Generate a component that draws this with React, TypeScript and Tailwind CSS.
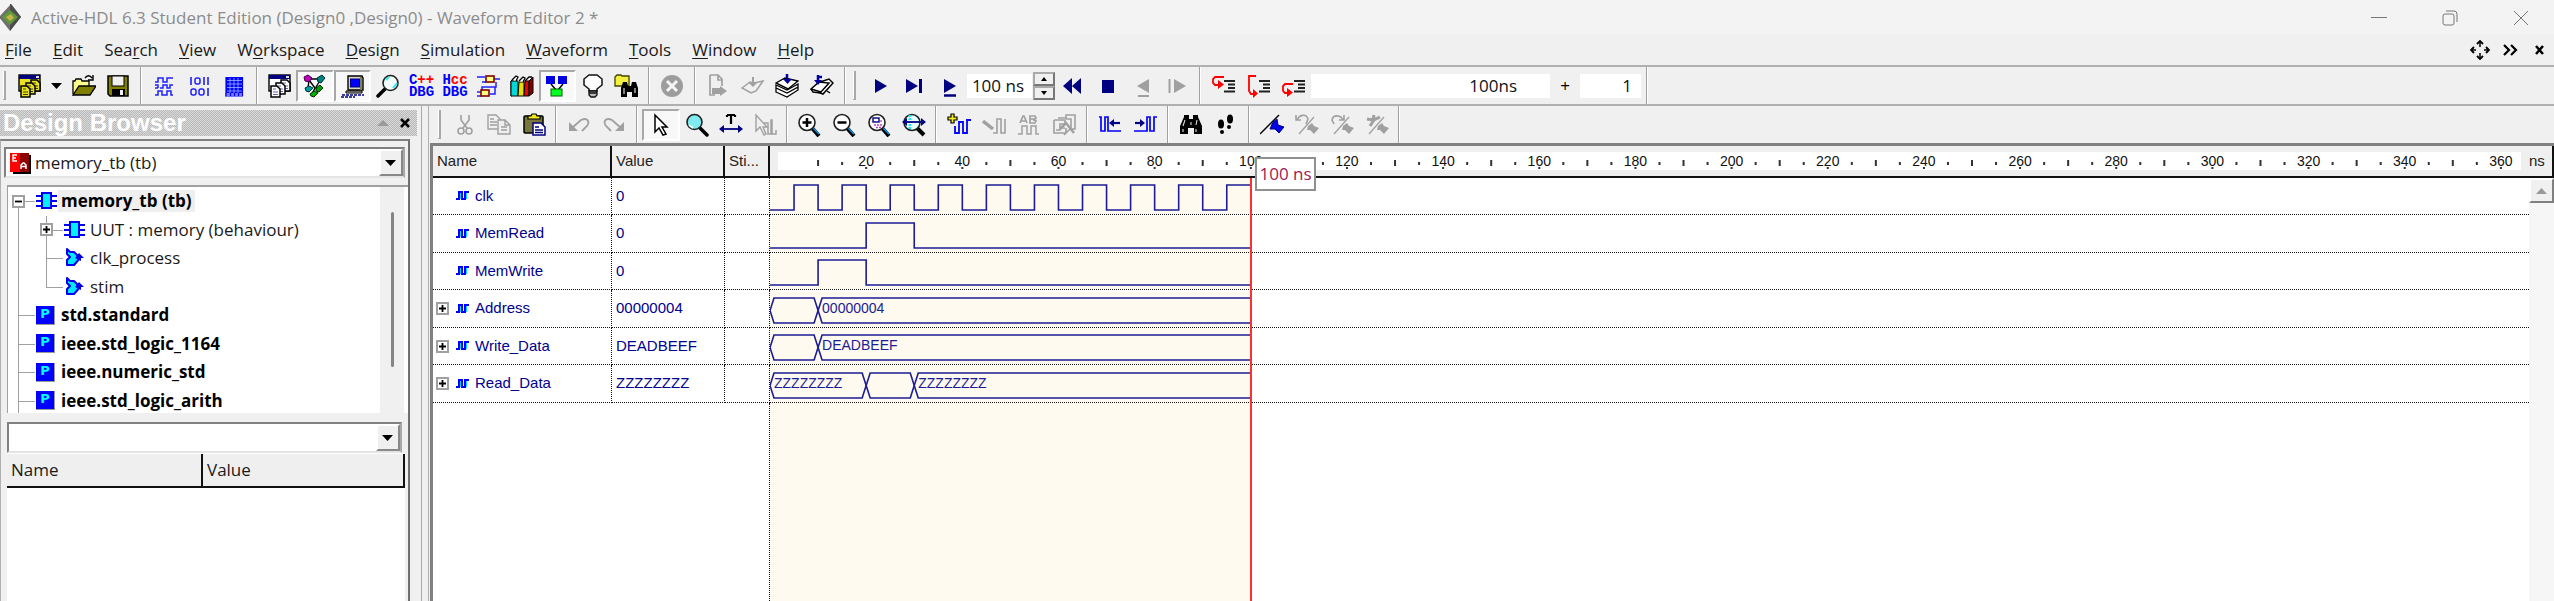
import React from "react";

const NAVY = "#000080";

function Icon({ children, w = 24, h = 24, label }: { children: React.ReactNode; w?: number; h?: number; label?: string }) {
  return (
    <svg width={w} height={h} viewBox={`0 0 ${w} ${h}`} fill="none" aria-hidden={!label} aria-label={label} className="shrink-0">
      {children}
    </svg>
  );
}

/* ---------- main toolbar icons ---------- */

const Page = ({ x, y, fill, line }: { x: number; y: number; fill: string; line: string }) => (
  <g>
    <path d={`M${x} ${y}h6l3 3v8h-9z`} fill={fill} stroke="#000" strokeWidth="1.5" />
    <path d={`M${x + 2} ${y + 3}h3M${x + 2} ${y + 6}h5M${x + 2} ${y + 8.5}h5`} stroke={line} strokeWidth="1.2" />
  </g>
);

const WindowPages = ({ fill, line }: { fill: string; line: string }) => (
  <Icon>
    <rect x="1" y="1" width="21" height="16" fill={fill} stroke="#000" strokeWidth="1.4" />
    <rect x="1" y="1" width="21" height="4" fill={NAVY} />
    <path d="M18 2h3v2h-3z" fill="#ddd" />
    <Page x={13} y={6} fill={fill} line={line} />
    <Page x={8} y={9} fill={fill} line={line} />
    <Page x={3} y={12} fill={fill} line={line} />
  </Icon>
);

const NewDoc = () => <WindowPages fill="#e8e020" line="#404000" />;
const Docs = () => <WindowPages fill="#ffffff" line="#6666aa" />;

const Open = () => (
  <Icon>
    <path d="M1 20V7h2l1-2h5l1 2h7v5" fill="#ffff90" stroke="#000" strokeWidth="1.3" />
    <path d="M1 21l6-9h17l-6 9z" fill="#808000" stroke="#000" strokeWidth="1.3" />
    <path d="M13 4c2-3 5-3 7 0M21 1v5h-5" stroke="#000" strokeWidth="1.4" />
  </Icon>
);

const Save = () => (
  <Icon>
    <path d="M2 2h20v20H4l-2-2z" fill="#808000" stroke="#000" strokeWidth="1.5" />
    <rect x="6" y="2" width="12" height="10" fill="#f0f0f0" stroke="#000" />
    <rect x="6" y="15" width="13" height="7" fill="#000" />
    <rect x="14" y="16" width="3" height="5" fill="#f0f0f0" />
  </Icon>
);

const WaveNew = () => (
  <Icon>
    <path d="M3 8h3V4h5v4h4V4h6M8 14h3v-3h4v3h3v-3h3M3 14h3M3 21h3v-4h4v4h5v-4h4v4h2M3 11h3v3" stroke="#2020ff" strokeWidth="1.5" />
  </Icon>
);

const Bits = () => (
  <Icon>
    <path d="M4 3v8M17 3v8M21 3v8M21 14v8" stroke="#2020ff" strokeWidth="1.6" />
    <rect x="8" y="4" width="5" height="6" rx="2" stroke="#2020ff" strokeWidth="1.5" />
    <rect x="4" y="15" width="5" height="6" rx="2" stroke="#2020ff" strokeWidth="1.5" />
    <rect x="12" y="15" width="5" height="6" rx="2" stroke="#2020ff" strokeWidth="1.5" />
  </Icon>
);

const GridIcon = () => (
  <Icon>
    <rect x="4" y="3" width="17" height="16" fill="#00f" />
    <path d="M3 20h18M3 22h18M4 3v19M8.500 3v19M12.500 3v19M16.500 3v19M20.500 3v19" stroke="#00f" strokeWidth="1.2" />
    <path d="M5 6.500h15M5 10h15M5 13.500h15M5 17h15M8 4v15M12 4v15M16 4v15" stroke="#9ab0ff" strokeWidth=".8" />
  </Icon>
);

const Hierarchy = () => (
  <Icon>
    <path d="M5 5l13 0M6 6l-1 8M6 6l6 8M13 13l5-8M12 14l6 0M12 14l-3 6" stroke="#000" strokeWidth="1.4" />
    <path d="M1 3l4-2 4 3-3 4-4-1z" fill="#c000c0" stroke="#400040" />
    <path d="M14 4l5-3 3 3-4 5-3-1z" fill="#008080" stroke="#003030" />
    <path d="M2 14l4-2 4 2-4 4-3-1z" fill="#00a0a0" stroke="#003030" />
    <path d="M13 14l4-3 3 3-4 4-3-1z" fill="#00a000" stroke="#003000" />
    <path d="M7 20l4-3 4 2-4 4-3-1z" fill="#00b000" stroke="#003000" />
  </Icon>
);

const Console = () => (
  <Icon>
    <path d="M7 2h14l1 2v12H7z" fill="#d8d8c0" stroke="#000" strokeWidth="1.4" />
    <path d="M20 3v13" stroke="#808060" strokeWidth="2" />
    <rect x="9.500" y="5" width="9" height="8" fill="#00f" stroke="#000080" />
    <path d="M5 17h16v2H5z" fill="#c0c0b0" stroke="#000" />
    <path d="M1 21h22M0 23h14" stroke="#000080" strokeWidth="1.4" strokeDasharray="3 1" />
  </Icon>
);

const Magnify = ({ flip = false }: { flip?: boolean }) => (
  <Icon>
    <g transform={flip ? "translate(24 0) scale(-1 1)" : undefined}>
      <path d="M9 15L2 22" stroke="#000" strokeWidth="3.500" strokeLinecap="round" />
      <circle cx="14.500" cy="9" r="7.500" fill={flip ? "#7feaf0" : "#f4ffff"} stroke="#222" strokeWidth="1.6" />
      <path d={flip ? "M16 15l4-3" : "M10 6l3-3M17 14l4-5"} stroke={flip ? "#e8ffff" : "#30e8f0"} strokeWidth="2" />
    </g>
  </Icon>
);

const Dbg = ({ kind }: { kind: "c" | "h" }) => (
  <span className="flex flex-col items-center font-['Liberation_Mono',monospace] text-[14px] leading-3 font-bold text-[#00f]">
    <span>
      {kind === "c" ? "C" : "H"}
      <span className="text-[#f00]">{kind === "c" ? "++" : "cc"}</span>
    </span>
    <span>DBG</span>
  </span>
);

const Circuit = () => (
  <Icon>
    <path d="M1 3h8M17 5h7M20 8v5H6v4M6 8h4M1 18h4M1 22h4M14 20h5v-7" stroke="#2020ff" strokeWidth="1.5" />
    <rect x="10" y="2" width="8" height="6" fill="#ffff80" stroke="#800000" strokeWidth="1.6" />
    <rect x="5" y="16" width="8" height="6" fill="#ffff80" stroke="#800000" strokeWidth="1.6" />
  </Icon>
);

const Books = () => (
  <Icon>
    <path d="M1 7l3-3v17l-3 1z" fill="#008080" stroke="#000" />
    <path d="M3 7h5v15H1V7z" fill="#00d8d8" stroke="#000" />
    <path d="M9 8h5v14H8z" fill="#e8e000" stroke="#000" />
    <path d="M15 7h4v15h-5z" fill="#f00000" stroke="#000" />
    <path d="M19 7l4-4v16l-4 3z" fill="#800000" stroke="#000" />
    <path d="M2 6l4-4 2 1-2 4M9 7l4-4 2 1-2 4M15 7l4-4 3 0" fill="#fff" stroke="#000" strokeWidth="1.3" />
  </Icon>
);

const Blocks = () => (
  <Icon>
    <path d="M6 10l5 6M18 10l-5 6" stroke="#000" strokeWidth="1.4" />
    <rect x="1" y="2" width="9" height="8" fill="#0000e0" />
    <rect x="13" y="2" width="9" height="8" fill="#0000e0" />
    <rect x="6" y="15" width="11" height="7" fill="#00ff20" stroke="#006000" />
  </Icon>
);

const Bulb = () => (
  <Icon>
    <path d="M8 15L3 11V5l5-4h8l5 4v6l-5 4v2H8z" fill="#fff" stroke="#111" strokeWidth="1.5" />
    <path d="M8 17h8v4l-2 2h-4l-2-2zM8 19h8" fill="#bbb" stroke="#111" strokeWidth="1.3" />
  </Icon>
);

const FindFolder = () => (
  <Icon>
    <path d="M1 3l2-2h4l1 1h7v10H1z" fill="#f4f040" stroke="#444400" strokeWidth="1.3" />
    <path d="M7 23V14l2-6h4l1 4h3l1-4h4l2 6v9h-6v-5h-5v5z" fill="#000" />
    <path d="M10 14v6M21 14v5" stroke="#fff" strokeWidth="1" />
  </Icon>
);

const Stop = () => (
  <Icon>
    <circle cx="12" cy="12" r="11" fill="#9d9d9d" />
    <path d="M7 7l10 10M17 7L7 17" stroke="#f5f5f5" strokeWidth="3" />
  </Icon>
);

const DocArrow = () => (
  <Icon>
    <path d="M4 1h8l4 4v7M4 1v20h5M12 1v5h4" stroke="#a0a0a0" strokeWidth="1.7" />
    <path d="M6 14h8v-2l7 5-7 5v-2H6z" fill="#a0a0a0" />
  </Icon>
);

const SheetGray = () => (
  <Icon>
    <path d="M1 14l8-6 4 1 9-2-7 10-5 2z" stroke="#a0a0a0" strokeWidth="1.5" />
    <path d="M12 3v8" stroke="#a0a0a0" strokeWidth="2" />
    <path d="M8 9h8l-4 4z" fill="#a0a0a0" />
  </Icon>
);

const Stack = () => (
  <Icon>
    <path d="M1 18l11 5 11-7v-3l-11 6-11-5zM1 14l11 5 11-6v-3l-11 6-11-5z" fill="#fff" stroke="#000" strokeWidth="1.3" />
    <path d="M1 9l9-5 13 3-10 8z" fill="#fff" stroke="#000" strokeWidth="1.4" />
    <path d="M12 0v6" stroke="#0000a0" strokeWidth="2.500" />
    <path d="M8 5h9l-4.500 5z" fill="#0000a0" />
  </Icon>
);

const SheetsNext = () => (
  <Icon>
    <path d="M10 8l9-3 4 4-10 11-5-2" fill="#fff" stroke="#000" strokeWidth="1.5" />
    <path d="M1 15l8-7 10 1-8 9z" fill="#fff" stroke="#000" strokeWidth="1.5" />
    <path d="M1 15l2 3 8 1M17 17l3 2" stroke="#000" strokeWidth="1.4" />
    <path d="M8 1v6M8 3h4" stroke="#0000a0" strokeWidth="2.500" />
    <path d="M4 6h8l-4 5z" fill="#0000a0" />
  </Icon>
);

const Play = () => <Icon><path d="M6 5l12 7-12 7z" fill={NAVY} /></Icon>;
const PlayEnd = () => (
  <Icon>
    <path d="M3 5l12 7-12 7z" fill={NAVY} />
    <path d="M17.500 5v14" stroke={NAVY} strokeWidth="3" />
  </Icon>
);
const PlayUnder = () => (
  <Icon>
    <path d="M6 5l12 7-12 7z" fill={NAVY} />
    <path d="M6 21.500h12" stroke={NAVY} strokeWidth="2.500" />
  </Icon>
);
const Rewind = () => <Icon><path d="M12 4L3 12l9 8zM21 4l-9 8 9 8z" fill={NAVY} /></Icon>;
const Square = () => <Icon><rect x="7" y="6" width="12" height="13" fill={NAVY} /></Icon>;
const BackGray = () => (
  <Icon>
    <path d="M19 5L7 12l12 7z" fill="#a0a0a0" />
    <path d="M8 22h11" stroke="#a0a0a0" strokeWidth="2" />
  </Icon>
);
const StepGray = () => (
  <Icon>
    <path d="M4.500 5v14" stroke="#a0a0a0" strokeWidth="2" />
    <path d="M9 5l12 7-12 7z" fill="#a0a0a0" />
  </Icon>
);

const Lines = () => <path d="M12 7h11M16 10.500h7M16 14h7M12 17.500h11" stroke="#222" strokeWidth="1.8" />;
const TraceInto = () => (
  <Icon>
    <path d="M12 3H3L1 5v4l2 2h4" stroke="#f00" strokeWidth="1.8" />
    <path d="M6 6l6 4.500L6 15z" fill="#f00" />
    <Lines />
  </Icon>
);
const TraceOver = () => (
  <Icon>
    <path d="M9 2H2v15l2 3h3" stroke="#f00" strokeWidth="1.8" />
    <path d="M6 15l5 4.500L6 24z" fill="#f00" />
    <Lines />
  </Icon>
);
const TraceOut = () => (
  <Icon>
    <path d="M11 10H3l-2 2v5l2 2h3" stroke="#f00" strokeWidth="1.8" />
    <path d="M5 14l6 4.500L5 23z" fill="#f00" />
    <Lines />
  </Icon>
);

/* ---------- waveform toolbar icons ---------- */

const Cut = () => (
  <Icon>
    <path d="M8 2v5l6 8M16 2v5l-6 8" stroke="#a0a0a0" strokeWidth="1.6" />
    <circle cx="8" cy="18" r="3" stroke="#a0a0a0" strokeWidth="1.6" />
    <circle cx="16" cy="18" r="3" stroke="#a0a0a0" strokeWidth="1.6" />
  </Icon>
);
const Copy = () => (
  <Icon>
    <path d="M1 2h8l4 4v10H1zM3 6h4M3 9h7M3 12h7" stroke="#a0a0a0" strokeWidth="1.4" />
    <path d="M11 7h7l5 5v9H11zM18 7v5h5M14 14h6M14 17h6" fill="#efefef" stroke="#a0a0a0" strokeWidth="1.4" />
  </Icon>
);
const Paste = () => (
  <Icon>
    <rect x="2" y="3" width="19" height="17" rx="1" fill="#77773a" stroke="#000" strokeWidth="1.5" />
    <path d="M6 6V3h3l1-2h4l1 2h3v3z" fill="#f0e820" stroke="#000" strokeWidth="1.2" />
    <path d="M11 10h8l4 4v8H11zM13 14h4M13 17h8M13 19.500h8" fill="#fff" stroke={NAVY} strokeWidth="1.5" />
  </Icon>
);
const Undo = () => (
  <Icon>
    <path d="M2 9v9h9z" fill="#a0a0a0" />
    <path d="M6 14l8-7c7-3 9 2 6 6l-5 5" stroke="#a0a0a0" strokeWidth="1.8" />
  </Icon>
);
const Redo = () => (
  <Icon>
    <path d="M22 9v9h-9z" fill="#a0a0a0" />
    <path d="M18 14l-8-7C3 4 1 9 4 13l5 5" stroke="#a0a0a0" strokeWidth="1.8" />
  </Icon>
);
const Cursor = () => (
  <Icon>
    <path d="M6 2v17l4-4 4 7 3-1-4-7h5z" fill="#fff" stroke="#000" strokeWidth="1.5" />
  </Icon>
);
const Measure = () => (
  <Icon>
    <path d="M8 2h8M12 2v9M8 2v2M16 2v2" stroke="#000" strokeWidth="2.200" />
    <path d="M3 16h18" stroke={NAVY} strokeWidth="1.8" />
    <path d="M5 12L0 16l5 4zM19 12l5 4-5 4z" fill={NAVY} />
  </Icon>
);
const CursorWave = () => (
  <Icon>
    <path d="M3 2v16l4-4 4 8 2-1-3-7h4z" stroke="#a0a0a0" strokeWidth="1.4" />
    <path d="M11 10h4v11h3V7h1v14h4v-4" stroke="#a0a0a0" strokeWidth="1.5" />
  </Icon>
);
const ZoomBase = ({ children }: { children: React.ReactNode }) => (
  <Icon>
    <path d="M15 15l7 8" stroke="#000" strokeWidth="4" />
    <path d="M15 14l7 7" stroke="#1090e0" strokeWidth="1.5" />
    <circle cx="10" cy="9.500" r="8" fill="#fff" stroke="#222" strokeWidth="1.6" />
    {children}
  </Icon>
);
const ZoomIn = () => <ZoomBase><path d="M10 5v9M5.500 9.500h9" stroke="#000" strokeWidth="2.500" /></ZoomBase>;
const ZoomOut = () => <ZoomBase><path d="M5.500 9.500h9" stroke="#000" strokeWidth="2.500" /></ZoomBase>;
const ZoomSel = () => (
  <ZoomBase>
    <rect x="6" y="5" width="6" height="4" stroke={NAVY} strokeWidth="1.4" />
    <path d="M7 12h8M9 14.500h6M14 7v3" stroke="#c040c0" strokeWidth="1.3" strokeDasharray="2 1" />
  </ZoomBase>
);
const ZoomFull = () => (
  <Icon>
    <path d="M15 15l7 7" stroke="#000" strokeWidth="4" />
    <circle cx="10" cy="9.500" r="8" fill="#e8ffff" stroke="#222" strokeWidth="1.6" />
    <path d="M8 2v15" stroke="#30e0f0" strokeWidth="3" strokeDasharray="2 1" />
    <path d="M3 9h18" stroke={NAVY} strokeWidth="1.8" />
    <path d="M5 5L0 9l5 4zM19 5l5 4-5 4z" fill={NAVY} />
  </Icon>
);
const AddWave = () => (
  <Icon>
    <path d="M8 13v7h4V9h4v11h4V7h4" stroke="#00f" strokeWidth="1.8" />
    <path d="M4 1h3v3h3v3H7v3H4V7H1V4h3z" fill="#f0e820" stroke="#000" strokeWidth="1.2" />
  </Icon>
);
const EditWave = () => (
  <Icon>
    <path d="M11 20h4V6h4v14h4V6" stroke="#a0a0a0" strokeWidth="1.6" />
    <path d="M1 8l10 8" stroke="#a0a0a0" strokeWidth="3.500" />
  </Icon>
);
const AbWave = () => (
  <Icon>
    <path d="M3 10l3-7h1l3 7M4 8h5M13 10V3h5l1 2-2 2 2 1-1 2zM13 6h5" stroke="#a0a0a0" strokeWidth="1.7" />
    <path d="M1 21h4v-8h5v8h4v-8h5v8h3" stroke="#a0a0a0" strokeWidth="1.5" />
  </Icon>
);
const MazeGray = () => (
  <Icon>
    <path d="M6 5h8V2h9v14h-6M2 7h11v4H8v4h5M2 7v13h12v-5M4 17h4v-4M14 6h5v4M19 6v9l-7 7" stroke="#a0a0a0" strokeWidth="1.6" />
    <path d="M8 16l6-6 8 10" stroke="#a0a0a0" strokeWidth="2.500" />
  </Icon>
);
const PrevEdge = () => (
  <Icon>
    <path d="M1 4h2v14h4V4h3v14h13" stroke="#00f" strokeWidth="1.7" />
    <path d="M14 10h8" stroke={NAVY} strokeWidth="2.200" />
    <path d="M16 6l-5 4 5 4z" fill={NAVY} />
  </Icon>
);
const NextEdge = () => (
  <Icon>
    <path d="M1 18h13V4h3v14h4V4h3" stroke="#00f" strokeWidth="1.7" />
    <path d="M2 10h6" stroke={NAVY} strokeWidth="2.200" />
    <path d="M7 6l5 4-5 4z" fill={NAVY} />
  </Icon>
);
const Binoculars = () => (
  <Icon>
    <path d="M1 21v-8l4-9V2h5v4h4V2h5v2l4 9v8h-8v-6h-6v6z" fill="#000" />
    <path d="M6 7l-2 6M18 7l-1 5M12 9v3M4 16v3M17 16v3" stroke="#ddd" strokeWidth="1.1" />
  </Icon>
);
const Feet = () => (
  <Icon>
    <ellipse cx="7" cy="11" rx="3" ry="4.500" fill="#000" />
    <ellipse cx="8" cy="19" rx="2" ry="2" fill="#000" />
    <ellipse cx="16" cy="6" rx="3" ry="4.500" fill="#000" />
    <ellipse cx="15" cy="14" rx="2" ry="2" fill="#000" />
  </Icon>
);
const Flag = () => (
  <Icon>
    <path d="M0 21L19 2" stroke="#000" strokeWidth="1.5" />
    <path d="M13 9l4-3 1 6 6 2-5 6-4-4-5 0z" fill="#0000e8" stroke={NAVY} />
  </Icon>
);
const FlagGray = ({ kind }: { kind: "prev" | "next" | "clear" }) => (
  <Icon>
    <path d="M4 21L19 4" stroke="#a0a0a0" strokeWidth="1.3" />
    <path d="M13 13l4-3 2 3 5 2-5 6-4-4-3 0z" fill="#a0a0a0" />
    {kind === "prev" && <path d="M1 2v5h5M2 7c2-5 9-7 11-1l-2 5" stroke="#a0a0a0" strokeWidth="1.6" />}
    {kind === "next" && <path d="M14 2v5H9M13 7C11 2 3 1 2 7l2 4" stroke="#a0a0a0" strokeWidth="1.6" />}
    {kind === "clear" && <path d="M2 6l6 1 1-5M5 13l4-6 6-3" stroke="#a0a0a0" strokeWidth="3" />}
  </Icon>
);

/* ---------- toolbar building blocks ---------- */

function Tool({ label, pressed = false, children }: { label: string; pressed?: boolean; children: React.ReactNode }) {
  return (
    <button
      type="button"
      aria-label={label}
      aria-pressed={pressed || undefined}
      className={
        pressed
          ? "flex h-8 min-w-0 flex-1 items-center justify-center border-2 border-t-[#a8a8a8] border-r-white border-b-white border-l-[#a8a8a8] bg-[#f8f8f8]"
          : "flex h-8 min-w-0 flex-1 items-center justify-center"
      }
    >
      {children}
    </button>
  );
}

const Sep = () => <span className="mx-[5px] w-[2px] shrink-0 self-stretch border-l border-l-[#a0a0a0] bg-white" />;
const Sep4 = () => <span className="mx-1 w-[2px] shrink-0 self-stretch border-l border-l-[#a0a0a0] bg-white" />;
const Grip = () => <span className="my-1 w-[3px] shrink-0 self-stretch border-r-2 border-b border-[#a8a8a8] bg-white" />;

const menus: [string, string, string][] = [
  ["", "F", "ile"],
  ["", "E", "dit"],
  ["Sea", "r", "ch"],
  ["", "V", "iew"],
  ["W", "o", "rkspace"],
  ["", "D", "esign"],
  ["", "S", "imulation"],
  ["", "W", "aveform"],
  ["", "T", "ools"],
  ["", "W", "indow"],
  ["", "H", "elp"],
];

function TitleBar() {
  return (
    <header className="flex h-[35px] shrink-0 items-center bg-[#f3f3f3] pr-[25px] text-[#8c8c8c]">
      <svg width="22" height="28" viewBox="0 0 22 28" aria-hidden="true">
        <path d="M11 0l10 13-11 14L-1 13z" fill="#6f6f6f" />
        <path d="M11 0l10 13-11 14V0z" fill="#4d4d4d" />
        <path d="M10 6l8 7-8 8-8-8z" fill="#5f9a3a" />
        <path d="M6 13l5-3 3 4-4 3z" fill="#c9b24a" />
      </svg>
      <h1 className="ml-[9px] flex-1 text-[17px] whitespace-nowrap">
        Active-HDL 6.3 Student Edition (Design0 ,Design0) - Waveform Editor 2 *
      </h1>
      <div className="flex items-center gap-[55px]">
        <button type="button" aria-label="Minimize">
          <Icon w={16} h={16}><path d="M0 7.500h16" stroke="#777" /></Icon>
        </button>
        <button type="button" aria-label="Restore">
          <Icon w={16} h={16}>
            <rect x="1" y="4" width="11" height="11" rx="2" stroke="#777" />
            <path d="M4 1h8a3 3 0 0 1 3 3v8" stroke="#777" />
          </Icon>
        </button>
        <button type="button" aria-label="Close">
          <Icon w={16} h={16}><path d="M1 1l14 14M15 1L1 15" stroke="#777" /></Icon>
        </button>
      </div>
    </header>
  );
}

function MenuBar() {
  return (
    <nav className="flex h-[30px] shrink-0 items-center pr-1 pl-[5px] text-[17px] text-[#1a1a1a]">
      <div className="flex flex-1 gap-[21px]">
        {menus.map(([a, u, b]) => (
          <button type="button" key={a + u + b} className="leading-6">
            {a}
            <span className="underline underline-offset-2">{u}</span>
            {b}
          </button>
        ))}
      </div>
      <div className="flex items-center gap-[10px]">
        <button type="button" aria-label="Move">
          <Icon w={20} h={20}>
            <path d="M10 1v6M10 13v6M1 10h5M14 10h5" stroke="#000" strokeWidth="1.5" />
            <path d="M7 4l3-3 3 3M7 16l3 3 3-3M4 7l-3 3 3 3M16 7l3 3-3 3" stroke="#000" strokeWidth="1.8" />
          </Icon>
        </button>
        <button type="button" aria-label="More">
          <Icon w={20} h={16}><path d="M4 3l5 5-5 5M11 3l5 5-5 5" stroke="#000" strokeWidth="2.200" /></Icon>
        </button>
        <button type="button" aria-label="Close document">
          <Icon w={20} h={16}><path d="M6 4l7 8M13 4l-7 8" stroke="#000" strokeWidth="2.500" /></Icon>
        </button>
      </div>
    </nav>
  );
}

function MainToolbar() {
  return (
    <div role="toolbar" aria-label="Standard" className="flex h-[41px] shrink-0 items-center border-t-2 border-b-2 border-t-[#b0b0b0] border-b-[#b0b0b0] pl-[3px]">
      <Grip />
      <div className="ml-[7px] flex w-[34px]"><Tool label="New document"><NewDoc /></Tool></div>
      <button type="button" aria-label="New document options" className="flex w-5 justify-center">
        <Icon w={12} h={8}><path d="M0 1h11L5.500 7z" fill="#000" /></Icon>
      </button>
      <div className="flex w-[68px]">
        <Tool label="Open"><Open /></Tool>
        <Tool label="Save"><Save /></Tool>
      </div>
      <Sep />
      <div className="flex w-[104px]">
        <Tool label="New waveform"><WaveNew /></Tool>
        <Tool label="Memory view"><Bits /></Tool>
        <Tool label="List"><GridIcon /></Tool>
      </div>
      <Sep />
      <div className="flex w-[380px]">
        <Tool label="Windows"><Docs /></Tool>
        <Tool label="Design browser" pressed><Hierarchy /></Tool>
        <Tool label="Console" pressed><Console /></Tool>
        <Tool label="Watch"><Magnify /></Tool>
        <Tool label="C++ debugger"><Dbg kind="c" /></Tool>
        <Tool label="Handel-C debugger"><Dbg kind="h" /></Tool>
        <Tool label="Dataflow"><Circuit /></Tool>
        <Tool label="Library manager"><Books /></Tool>
        <Tool label="Design flow" pressed><Blocks /></Tool>
        <Tool label="Assistant"><Bulb /></Tool>
        <Tool label="Find in files"><FindFolder /></Tool>
      </div>
      <Sep />
      <div className="flex w-[34px]"><Tool label="Cancel"><Stop /></Tool></div>
      <Sep />
      <div className="flex w-[138px]">
        <Tool label="Compile"><DocArrow /></Tool>
        <Tool label="Compile selected"><SheetGray /></Tool>
        <Tool label="Compile all"><Stack /></Tool>
        <Tool label="Compile in order"><SheetsNext /></Tool>
      </div>
      <Sep />
      <div className="flex self-stretch pl-[2px]"><Grip /></div>
      <div className="ml-2 flex w-[103px]">
        <Tool label="Run"><Play /></Tool>
        <Tool label="Run until"><PlayEnd /></Tool>
        <Tool label="Run for"><PlayUnder /></Tool>
      </div>
      <input aria-label="Simulation step" defaultValue="100 ns" className="mr-px h-6 w-[65px] bg-white pr-2 text-right text-[17px] text-[#111]" />
      <div className="flex w-[22px] flex-col">
        <button type="button" aria-label="Increase step" className="flex h-[14px] items-center justify-center border-2 border-t-[#aaa] border-r-[#777] border-b-[#777] border-l-[#aaa]">
          <Icon w={6} h={4}><path d="M0 4h6L3 0z" fill="#000" /></Icon>
        </button>
        <button type="button" aria-label="Decrease step" className="flex h-[14px] items-center justify-center border-2 border-t-[#aaa] border-r-[#777] border-b-[#777] border-l-[#aaa]">
          <Icon w={6} h={4}><path d="M0 0h6L3 4z" fill="#000" /></Icon>
        </button>
      </div>
      <div className="flex w-[139px]">
        <Tool label="Restart"><Rewind /></Tool>
        <Tool label="Stop"><Square /></Tool>
        <Tool label="Step back"><BackGray /></Tool>
        <Tool label="Step"><StepGray /></Tool>
      </div>
      <Sep />
      <div className="flex w-[105px]">
        <Tool label="Trace into"><TraceInto /></Tool>
        <Tool label="Trace over"><TraceOver /></Tool>
        <Tool label="Trace out"><TraceOut /></Tool>
      </div>
      <output aria-label="Current time" className="h-6 w-[239px] bg-white pr-[33px] text-right text-[17px] leading-6 text-[#111]">100ns</output>
      <span className="w-[30px] text-center text-[17px]">+</span>
      <output aria-label="Delta" className="h-6 w-[61px] bg-white pr-[9px] text-right text-[17px] leading-6 text-[#111]">1</output>
      <Sep />
    </div>
  );
}

function WaveToolbar() {
  return (
    <div role="toolbar" aria-label="Waveform" className="flex h-[37px] shrink-0 items-center pl-2">
      <Grip />
      <div className="ml-[7px] flex w-[103px]">
        <Tool label="Cut"><Cut /></Tool>
        <Tool label="Copy"><Copy /></Tool>
        <Tool label="Paste"><Paste /></Tool>
      </div>
      <Sep4 />
      <div className="flex w-[71px]">
        <Tool label="Undo"><Undo /></Tool>
        <Tool label="Redo"><Redo /></Tool>
      </div>
      <Sep4 />
      <div className="flex w-[140px]">
        <Tool label="Select" pressed><Cursor /></Tool>
        <Tool label="Zoom"><Magnify flip /></Tool>
        <Tool label="Measure"><Measure /></Tool>
        <Tool label="Edit signal"><CursorWave /></Tool>
      </div>
      <Sep4 />
      <div className="flex w-[139px]">
        <Tool label="Zoom in"><ZoomIn /></Tool>
        <Tool label="Zoom out"><ZoomOut /></Tool>
        <Tool label="Zoom to selection"><ZoomSel /></Tool>
        <Tool label="Zoom to fit"><ZoomFull /></Tool>
      </div>
      <Sep4 />
      <div className="flex w-[141px]">
        <Tool label="Add signals"><AddWave /></Tool>
        <Tool label="Edit waveform"><EditWave /></Tool>
        <Tool label="Stimulators"><AbWave /></Tool>
        <Tool label="Compare"><MazeGray /></Tool>
      </div>
      <Sep4 />
      <div className="flex w-[71px]">
        <Tool label="Previous event"><PrevEdge /></Tool>
        <Tool label="Next event"><NextEdge /></Tool>
      </div>
      <Sep4 />
      <div className="flex w-[71px]">
        <Tool label="Find"><Binoculars /></Tool>
        <Tool label="Trace"><Feet /></Tool>
      </div>
      <Sep4 />
      <div className="flex w-[140px]">
        <Tool label="Toggle bookmark"><Flag /></Tool>
        <Tool label="Previous bookmark"><FlagGray kind="prev" /></Tool>
        <Tool label="Next bookmark"><FlagGray kind="next" /></Tool>
        <Tool label="Clear bookmarks"><FlagGray kind="clear" /></Tool>
      </div>
      <Sep4 />
    </div>
  );
}

/* ---------- design browser ---------- */

const Chip = () => (
  <Icon w={21} h={20}>
    <path d="M0 5h21M0 10h21M0 15h21" stroke="#0000f0" strokeWidth="2" />
    <rect x="6" y="2" width="9" height="15" fill="#00f0ff" stroke="#0000f0" strokeWidth="2" />
  </Icon>
);
const Process = () => (
  <Icon w={21} h={20}>
    <path d="M3 1l3 3h4l6 6-6 7H3V12l3-3-3-3z" fill="#00e8ff" stroke="#0000f0" strokeWidth="2" strokeLinejoin="round" />
    <path d="M11 10l4-5 5 5h-3v3z" fill="#0000e0" />
  </Icon>
);
const Package = () => (
  <span className="flex h-[19px] w-[19px] shrink-0 items-start justify-center border-r border-b border-[#999] bg-[#0000ff] font-['DejaVu_Sans',sans-serif] text-[13px] leading-4 font-bold text-[#00ffff]">
    P
  </span>
);

function Expander({ open }: { open?: boolean }) {
  return (
    <button type="button" aria-label={open ? "Collapse" : "Expand"} className="flex h-[13px] w-[13px] shrink-0 items-center justify-center border-2 border-[#a0a0a0] bg-white">
      <Icon w={9} h={9}>
        <path d={open ? "M1 4.500h7" : "M1 4.500h7M4.500 1v7"} stroke="#000" strokeWidth="1.8" />
      </Icon>
    </button>
  );
}

type Node = { label: string; depth: 0 | 1; kind: "chip" | "process" | "package"; toggle?: "open" | "closed"; last?: boolean; first?: boolean };

const nodes: Node[] = [
  { label: "memory_tb (tb)", depth: 0, kind: "chip", toggle: "open", first: true },
  { label: "UUT : memory (behaviour)", depth: 1, kind: "chip", toggle: "closed" },
  { label: "clk_process", depth: 1, kind: "process" },
  { label: "stim", depth: 1, kind: "process", last: true },
  { label: "std.standard", depth: 0, kind: "package" },
  { label: "ieee.std_logic_1164", depth: 0, kind: "package" },
  { label: "ieee.numeric_std", depth: 0, kind: "package" },
  { label: "ieee.std_logic_arith", depth: 0, kind: "package" },
];

const Guide = ({ branch, half, toggle, top }: { branch?: boolean; half?: boolean; toggle?: "open" | "closed"; top?: boolean }) => (
  <span className="relative flex w-7 shrink-0 items-center self-stretch pl-1">
    <span
      className={
        half
          ? "absolute top-0 bottom-1/2 left-[10px] w-px bg-[#a0a0a0]"
          : top
            ? "absolute top-1/2 bottom-0 left-[10px] w-px bg-[#a0a0a0]"
            : "absolute top-0 bottom-0 left-[10px] w-px bg-[#a0a0a0]"
      }
    />
    {branch && <span className="absolute top-1/2 right-px left-[10px] h-px bg-[#a0a0a0]" />}
    {toggle && <span className="relative flex"><Expander open={toggle === "open"} /></span>}
  </span>
);

function Tree() {
  return (
    <div className="ml-[3px] flex h-[228px] shrink-0 overflow-hidden border-t-2 border-l border-[#a0a0a0] bg-white">
      <ul className="flex h-[228px] flex-1 flex-col">
        {nodes.map((n) => (
          <li key={n.label} className="flex min-h-0 flex-1 items-center">
            {n.depth === 1 && <Guide />}
            <Guide branch toggle={n.toggle} half={n.last} top={n.first} />
            {n.kind === "chip" ? <Chip /> : n.kind === "process" ? <Process /> : <Package />}
            <span
              className={
                n.first
                  ? "ml-px bg-[#efefef] px-[3px] text-[17px] leading-[22px] font-bold text-black"
                  : n.depth === 1
                    ? "ml-[5px] text-[17px] leading-[22px] text-[#1a1a1a]"
                    : "ml-[6px] text-[17px] leading-[22px] font-bold text-black"
              }
            >
              {n.label}
            </span>
          </li>
        ))}
      </ul>
      <div className="mr-1 flex w-6 justify-center bg-[#f0f0f0] pt-[25px]">
        <span className="h-[155px] w-[3px] rounded bg-[#858585]" />
      </div>
    </div>
  );
}

function Combo({ label, value, icon }: { label: string; value: string; icon?: React.ReactNode }) {
  return (
    <label className="flex h-[31px] items-stretch border-2 border-t-[#808080] border-r-[#a8a8a8] border-b-[#e4e4e4] border-l-[#808080] bg-white">
      {icon && <span className="flex items-center pl-1">{icon}</span>}
      <select aria-label={label} defaultValue={value} className="min-w-0 flex-1 appearance-none bg-transparent pl-1 text-[17px] leading-6 text-[#1a1a1a]">
        <option value={value}>{value}</option>
      </select>
      <span aria-hidden="true" className="flex w-6 items-center justify-center border-2 border-t-white border-r-[#888] border-b-[#888] border-l-white bg-[#f0f0f0]">
        <Icon w={12} h={8}><path d="M0 1h11L5.500 7z" fill="#000" /></Icon>
      </span>
    </label>
  );
}

function DesignBrowser() {
  return (
    <aside className="flex w-[422px] shrink-0 flex-col border-r border-r-[#a8a8a8] pt-1">
      <div className="mr-[4px] flex h-[26px] shrink-0 items-center bg-[repeating-conic-gradient(#b8b8b8_0_25%,#dadada_0_50%)] bg-[length:2px_2px] pr-1 pl-[3px]">
        <h2 className="flex-1 font-['Liberation_Sans',sans-serif] text-2xl leading-6 font-bold whitespace-nowrap text-white">Design Browser</h2>
        <button type="button" aria-label="Collapse panel" className="mr-[10px]">
          <Icon w={14} h={8}><path d="M1 7h12L7 1z" fill="#9a9a9a" /></Icon>
        </button>
        <button type="button" aria-label="Close panel" className="mr-[3px]">
          <Icon w={10} h={10}><path d="M1 1l8 8M9 1L1 9" stroke="#000" strokeWidth="2.500" /></Icon>
        </button>
      </div>
      <div className="mt-[3px] mr-[11px] flex min-h-0 flex-1 flex-col border-t-2 border-r-2 border-l border-t-[#808080] border-r-[#707070] border-l-[#b0b0b0] pl-[3px]">
        <div className="mt-[6px] mr-[3px] mb-[7px] shrink-0">
          <Combo
            label="Top-level unit"
            value="memory_tb (tb)"
            icon={
              <Icon w={21} h={22}>
                <rect x="3" y="3" width="18" height="19" fill="#000" />
                <rect x="0" y="1" width="19" height="19" fill="#800000" />
                <path d="M0 1h19v7h-9v12H0z" fill="#f00" />
                <rect x="10" y="1" width="9" height="19" fill="#900000" />
                <path d="M7 3H3v6h4M3 6h3" stroke="#fff" strokeWidth="1.4" />
                <path d="M11 17v-4l2-2h1l2 2v4M11 14.500h5" stroke="#fff" strokeWidth="1.5" />
              </Icon>
            }
          />
        </div>
        <Tree />
        <div className="mt-[9px] mr-[6px] ml-[3px] shrink-0"><Combo label="Object" value="" /></div>
        <div className="mr-[3px] ml-[3px] flex-1 bg-white pt-px">
          <table className="w-full table-fixed border-collapse text-left text-[17px] text-[#1a1a1a]">
            <colgroup>
              <col className="w-[195px]" />
              <col />
            </colgroup>
            <thead>
              <tr className="h-[33px] bg-[#efefef]">
                <th scope="col" className="border-r-2 border-b-2 border-[#111] pl-1 font-normal">Name</th>
                <th scope="col" className="border-r-2 border-b-2 border-[#111] pl-1 font-normal">Value</th>
              </tr>
            </thead>
          </table>
        </div>
      </div>
    </aside>
  );
}

/* ---------- waveform ---------- */

const X0 = 0;
const PX_PER_NS = 4.808;
const END = 100;
const HI = 7;
const LO = 32;
const at = (ns: number) => X0 + ns * PX_PER_NS;

type Segment = { from: number; to: number; text?: string };
type Signal = { name: string; value: string; edges?: number[]; bus?: Segment[] };

const signals: Signal[] = [
  { name: "clk", value: "0", edges: [5, 10, 15, 20, 25, 30, 35, 40, 45, 50, 55, 60, 65, 70, 75, 80, 85, 90, 95] },
  { name: "MemRead", value: "0", edges: [20, 30] },
  { name: "MemWrite", value: "0", edges: [10, 20] },
  { name: "Address", value: "00000004", bus: [{ from: 0, to: 10 }, { from: 10, to: END, text: "00000004" }] },
  { name: "Write_Data", value: "DEADBEEF", bus: [{ from: 0, to: 10 }, { from: 10, to: END, text: "DEADBEEF" }] },
  { name: "Read_Data", value: "ZZZZZZZZ", bus: [{ from: 0, to: 20, text: "ZZZZZZZZ" }, { from: 20, to: 30 }, { from: 30, to: END, text: "ZZZZZZZZ" }] },
];

function levelPath(edges: number[]) {
  let high = false;
  let d = `M${at(0)} ${LO}`;
  for (const e of edges) {
    high = !high;
    d += `H${at(e)}V${high ? HI : LO}`;
  }
  return d + `H${at(END)}`;
}

function busPath({ from, to }: Segment) {
  const a = at(from);
  const b = at(to);
  const mid = (HI + LO) / 2;
  if (to === END) return `M${b} ${HI}H${a + 4}L${a} ${mid}L${a + 4} ${LO}H${b}`;
  return `M${a} ${mid}L${a + 4} ${HI}H${b - 4}L${b} ${mid}L${b - 4} ${LO}H${a + 4}Z`;
}

function Trace({ signal }: { signal: Signal }) {
  return (
    <svg width="482" height="36" className="block font-['Liberation_Sans',sans-serif]" aria-label={`${signal.name} waveform`}>
      <g fill="none" stroke="#1c1c96" strokeWidth="1.6">
        {signal.edges && <path d={levelPath(signal.edges)} />}
        {signal.bus?.map((s) => <path key={s.from} d={busPath(s)} />)}
      </g>
      {signal.bus?.map((s) => s.text && (
        <text key={s.from} x={at(s.from) + 4} y="22" fontSize="14" fill="#1c1c96">{s.text}</text>
      ))}
    </svg>
  );
}

const tickList = Array.from({ length: 71 }, (_, i) => (i + 2) * 5);

function Ruler() {
  return (
    <svg width="100%" height="18" className="block bg-white font-['Liberation_Sans',sans-serif]" aria-label="Time scale">
      {tickList.map((t) => {
        const x = t * PX_PER_NS - 8;
        if (t % 20 === 0)
          return (
            <g key={t}>
              <text x={x} y="14" fontSize="14" textAnchor="middle" fill="#111">{t}</text>
              <rect x={x - 1} y="15" width="2" height="2" fill="#333" />
            </g>
          );
        return <rect key={t} x={x - 1} y={t % 10 === 0 ? 8 : 10} width="2" height={t % 10 === 0 ? 6 : 3} fill="#333" />;
      })}
    </svg>
  );
}

const SignalIcon = () => (
  <Icon w={14} h={10}>
    <path d="M3 1h2v7H3zM8 1h3v7H8z" fill="#00e0ff" />
    <path d="M0 8h3V1h3v7h3V1h4" stroke="#0000ff" strokeWidth="2" />
  </Icon>
);

const headCell = "border-r-2 border-[#111] bg-[#efefef] pl-1 font-normal";
const bodyCell = "border-r border-b border-dotted border-[#111]";

function WaveEditor() {
  return (
    <section className="flex min-w-0 flex-1 flex-col border-l border-l-[#b0b0b0] pl-px">
      <WaveToolbar />
      <div className="relative flex min-h-0 flex-1 flex-col border-t-3 border-l-3 border-[#808080] bg-white font-['Liberation_Sans',sans-serif]">
        <table className="w-full table-fixed border-separate border-spacing-0 text-left text-[15px] text-[#000090]">
          <colgroup>
            <col className="w-[179px]" />
            <col className="w-[113px]" />
            <col className="w-[45px]" />
            <col />
            <col className="w-[25px]" />
          </colgroup>
          <thead>
            <tr className="h-8 text-[#222] *:border-b-2 *:border-b-[#111]">
              <th scope="col" className={headCell}>Name</th>
              <th scope="col" className={headCell}>Value</th>
              <th scope="col" className={headCell}>Sti...</th>
              <th scope="col" className="bg-[#efefef] pr-2 pl-2 font-normal"><Ruler /></th>
              <th scope="col" className="border-r-2 border-[#111] bg-[#efefef] text-[15px] font-normal">ns</th>
            </tr>
          </thead>
          <tbody>
            {signals.map((s, i) => (
              <tr key={s.name} className="odd:h-[37px] even:h-[38px]">
                <td className={bodyCell}>
                  <div className="flex items-center pl-[3px]">
                    <span className="w-5">{s.bus && <Expander />}</span>
                    <SignalIcon />
                    <span className="ml-[5px]">{s.name}</span>
                  </div>
                </td>
                <td className={bodyCell + " pl-1"}>{s.value}</td>
                <td className={bodyCell} />
                <td className="border-b border-dotted border-[#111] p-0">
                  <div className="w-[482px] bg-[#fefaef]"><Trace signal={s} /></div>
                </td>
                {i === 0 && (
                  <td rowSpan={6} className="bg-[#f6f6f6] p-0 align-top">
                    <button type="button" aria-label="Scroll up" className="flex h-[25px] w-full items-center justify-center border-2 border-t-white border-r-[#808080] border-b-[#808080] border-l-white bg-[#f0f0f0]">
                      <Icon w={12} h={8}><path d="M0 7h11L5.500 1z" fill="#9a9a9a" /></Icon>
                    </button>
                  </td>
                )}
              </tr>
            ))}
          </tbody>
        </table>
        <div className="flex flex-1 pl-[336px]">
          <div className="w-[483px] border-l border-dotted border-[#111] bg-[#fefaef]" />
          <div className="flex-1" />
          <div className="w-[25px] bg-[#f6f6f6]" />
        </div>
        <span className="absolute top-8 bottom-0 left-[817px] w-[2px] bg-[#ff3030]" />
        <span role="tooltip" className="absolute top-[11px] left-[822px] flex h-[34px] w-[61px] items-center justify-center border-2 border-[#909090] bg-white font-['Open_Sans','Noto_Sans',sans-serif] text-[17px] text-[#a02050]">
          100 ns
        </span>
      </div>
    </section>
  );
}

export default function App() {
  return (
    <div className="flex h-screen min-h-[601px] flex-col overflow-hidden bg-[#f0f0f0] font-['Open_Sans','Noto_Sans',sans-serif]">
      <TitleBar />
      <MenuBar />
      <MainToolbar />
      <main className="flex min-h-0 flex-1">
        <DesignBrowser />
        <div className="w-[6px] shrink-0" />
        <WaveEditor />
      </main>
    </div>
  );
}
